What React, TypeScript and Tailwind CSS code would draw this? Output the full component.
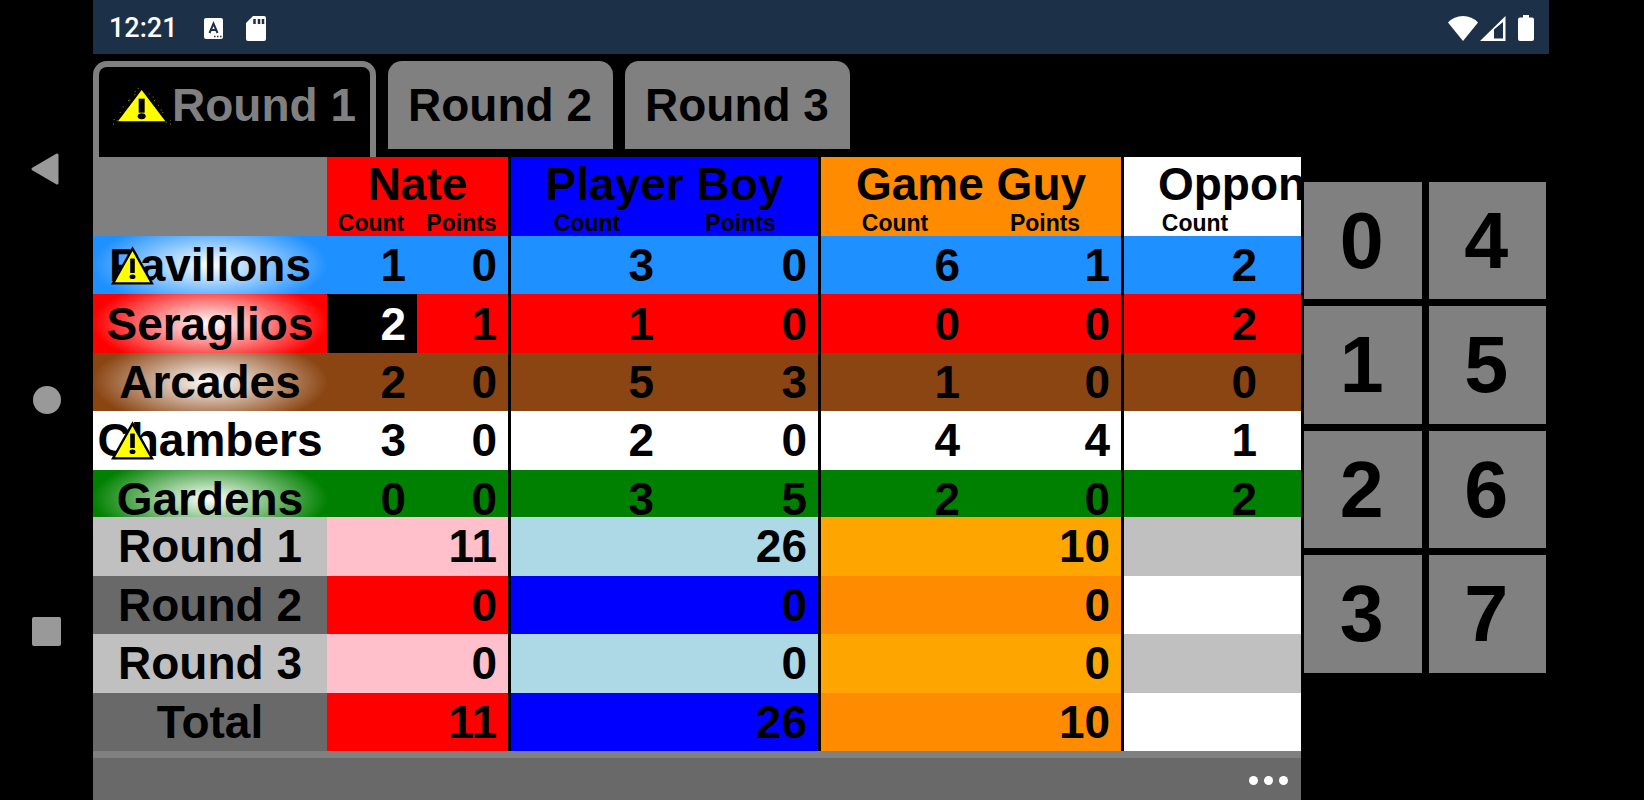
import React, { useState } from 'react';
import { clsx } from 'clsx';

const players = [
  { name: 'Nate', header: 'bg-[#ff0000]', dark: 'bg-[#ff0000]', light: 'bg-[#ffc0cb]', totals: ['11', '0', '0', '11'] },
  { name: 'Player Boy', header: 'bg-[#0000ff]', dark: 'bg-[#0000ff]', light: 'bg-[#add8e6]', totals: ['26', '0', '0', '26'] },
  { name: 'Game Guy', header: 'bg-[#ff8c00]', dark: 'bg-[#ff8c00]', light: 'bg-[#ffa500]', totals: ['10', '0', '0', '10'] },
  { name: 'Opponent', header: 'bg-white', dark: 'bg-white', light: 'bg-[#c0c0c0]', totals: ['', '', '', ''] },
];

const buildings = [
  { name: 'Pavilions', warning: true, color: 'bg-[#1e90ff]', glow: 'bg-[radial-gradient(118px_44px,white,#1e90ff)]', cells: ['1', '0', '3', '0', '6', '1', '2', ''] },
  { name: 'Seraglios', warning: false, color: 'bg-[#ff0000]', glow: 'bg-[radial-gradient(118px_44px,white,#ff0000)]', cells: ['2', '1', '1', '0', '0', '0', '2', ''] },
  { name: 'Arcades', warning: false, color: 'bg-[#8b4513]', glow: 'bg-[radial-gradient(118px_44px,white,#8b4513)]', cells: ['2', '0', '5', '3', '1', '0', '0', ''] },
  { name: 'Chambers', warning: true, color: 'bg-white', glow: 'bg-white', cells: ['3', '0', '2', '0', '4', '4', '1', ''] },
  { name: 'Gardens', warning: false, color: 'bg-[#008000]', glow: 'bg-[radial-gradient(118px_44px,white,#008000)]', cells: ['0', '0', '3', '5', '2', '0', '2', ''] },
];

const rounds = ['Round 1', 'Round 2', 'Round 3'];
const summaryRows = [...rounds, 'Total'];
const keys = [0, 4, 1, 5, 2, 6, 3, 7];

const Warning = ({ className }: { className?: string }) => (
  <svg viewBox="0 0 130 116" className={className} aria-hidden="true">
    <path d="M65 7 L124 112 H6 Z" fill="#ffff00" stroke="#000" strokeWidth="7" />
    <rect x="58" y="37" width="14" height="44" rx="2" />
    <ellipse cx="65" cy="92" rx="9" ry="7" />
  </svg>
);

const TabWarning = () => (
  <svg viewBox="0 0 180 114" className="h-[38px] w-[60px]" aria-hidden="true">
    <path d="M89 6 L160 100 H18 Z" fill="#ffff00" />
    <rect x="80" y="32" width="18" height="42" />
    <ellipse cx="89" cy="85" rx="12" ry="9" />
    <path
      d="M77 2h3M68 11h3M67 20h3M52 36h3M48 38h3M32 57h3M23 73h3M5 95h3M3 108h3M14 98h3M110 18h3M122 27h3M126 38h3M138 52h3M146 66h3M151 73h3M161 103h3M174 108h3M174 98h2"
      stroke="#8c8c00"
      strokeWidth="3"
    />
  </svg>
);

const SystemNav = () => (
  <nav aria-label="System" className="grid w-[93px] shrink-0 grid-rows-3 justify-items-center py-[53px]">
    <button aria-label="Back">
      <svg viewBox="0 0 30 34" className="mr-1 h-[34px] w-[30px]">
        <path d="M3 17 L27 3 V31 Z" fill="#999" stroke="#999" strokeWidth="3" strokeLinejoin="round" />
      </svg>
    </button>
    <button aria-label="Home">
      <span className="block size-7 rounded-full bg-[#999]" />
    </button>
    <button aria-label="Recent apps">
      <span className="block size-[29px] rounded-xs bg-[#999]" />
    </button>
  </nav>
);

const StatusBar = () => (
  <header className="flex h-[54px] shrink-0 items-center bg-[#1c3148] pt-[2px] pr-[15px] pl-4 text-white">
    <span className="font-[Roboto,sans-serif] text-[27px] leading-8 font-medium">12:21</span>
    <svg viewBox="0 0 19 21" className="ml-[26px] h-[21px] w-[19px]" aria-hidden="true">
      <rect width="19" height="21" rx="2" fill="#fff" />
      <path d="M5.5 15 L9.5 5.5 L13.5 15 M7 12 H12" fill="none" stroke="#1c3148" strokeWidth="2" />
      <path d="M10 18.5h1.5M13 18.5h1.5M16 18.5h1.5" stroke="#1c3148" strokeWidth="1.5" />
    </svg>
    <svg viewBox="0 0 20 25" className="ml-[23px] h-[25px] w-5" aria-hidden="true">
      <path d="M7 0H18a2 2 0 0 1 2 2V23a2 2 0 0 1-2 2H2a2 2 0 0 1-2-2V7Z" fill="#fff" />
      <path d="M8.5 3v5M13 3v5M17 3v5" stroke="#1c3148" strokeWidth="2.5" />
    </svg>
    <svg viewBox="0 0 30 25" className="ml-auto h-[25px] w-[30px]" aria-hidden="true">
      <path d="M0 6.5 Q6 0 15 0 T30 6.5 L15 25Z" fill="#fff" />
    </svg>
    <svg viewBox="0 0 26 25" className="ml-[2px] h-[25px] w-[26px]" aria-hidden="true">
      <path fillRule="evenodd" d="M0 25 L25.500 0 V25Z M14 13.500 V22.500 H23 V6Z" fill="#fff" />
    </svg>
    <svg viewBox="0 0 16 26" className="ml-3 h-[26px] w-4" aria-hidden="true">
      <path d="M5 0h6v2.500h3a2 2 0 0 1 2 2V24a2 2 0 0 1-2 2H2a2 2 0 0 1-2-2V4.500a2 2 0 0 1 2-2h3Z" fill="#fff" />
    </svg>
  </header>
);

const Columns = () => (
  <colgroup>
    <col className="w-[234px]" />
    <col className="w-[90px]" />
    <col className="w-[94px]" />
    <col className="w-[154px]" />
    <col className="w-[156px]" />
    <col className="w-[150px]" />
    <col className="w-[153px]" />
    <col className="w-36" />
    <col className="w-36" />
  </colgroup>
);

const ScoreTable = () => (
  <div className="min-h-0 flex-1 overflow-hidden">
    <table className="h-[371px] w-[1319px] table-fixed border-separate border-spacing-0 leading-none">
      <Columns />
      <thead>
        <tr className="h-[53px]">
          <td rowSpan={2} className="bg-[#808080] p-0" />
          {players.map((player) => (
            <th key={player.name} colSpan={2} className={clsx('border-r-3 border-black p-0', player.header)}>
              {player.name}
            </th>
          ))}
        </tr>
        <tr className="h-[26px] text-[23px]">
          {players.map((player) => (
            <React.Fragment key={player.name}>
              <th className={clsx('py-0 pr-[2px] pl-0', player.header)}>Count</th>
              <th className={clsx('border-r-3 border-black py-0 pr-[2px] pl-0', player.header)}>Points</th>
            </React.Fragment>
          ))}
        </tr>
      </thead>
      <tbody>
        {buildings.map((building) => (
          <tr key={building.name} className={building.color}>
            <th scope="row" className={clsx('relative p-0', building.glow)}>
              {building.name}
              {building.warning && <Warning className="absolute top-[10px] left-[18px] h-[39px] w-[43px]" />}
            </th>
            {building.cells.map((cell, index) => (
              <td
                key={index}
                className={clsx(
                  'py-0 pr-[11px] pl-0 text-right',
                  index % 2 === 1 && 'border-r-3 border-black',
                  building.name === 'Seraglios' && index === 0 && 'bg-black text-white'
                )}
              >
                {cell}
              </td>
            ))}
          </tr>
        ))}
      </tbody>
    </table>
  </div>
);

const SummaryTable = () => (
  <div className="shrink-0 overflow-hidden">
    <table className="h-[234px] w-[1319px] table-fixed border-separate border-spacing-0 leading-none">
      <Columns />
      <tbody>
        {summaryRows.map((label, row) => (
          <tr key={label}>
            <th scope="row" className={clsx('p-0', row % 2 === 0 ? 'bg-[#c0c0c0]' : 'bg-[#696969]')}>
              {label}
            </th>
            {players.map((player) => (
              <td
                key={player.name}
                colSpan={2}
                className={clsx(
                  'border-r-3 border-black py-0 pr-[11px] pl-0 text-right',
                  row % 2 === 0 ? player.light : player.dark
                )}
              >
                {player.totals[row]}
              </td>
            ))}
          </tr>
        ))}
      </tbody>
    </table>
  </div>
);

const App = () => {
  const [activeRound, setActiveRound] = useState(0);

  return (
    <div className="flex h-screen bg-black font-['Liberation_Sans',Arial,sans-serif] text-[46px] leading-none font-bold text-black">
      <SystemNav />
      <div className="flex min-w-0 flex-1 flex-col">
        <StatusBar />
        <main className="flex min-h-0 flex-1">
          <div className="flex min-w-0 flex-1 flex-col">
            <div role="tablist" className="flex h-[103px] shrink-0 items-start gap-3 pt-[7px]">
              {rounds.map((round, index) => (
                <button
                  key={round}
                  role="tab"
                  aria-selected={index === activeRound}
                  onClick={() => setActiveRound(index)}
                  className={clsx(
                    'flex rounded-t-[14px]',
                    index === activeRound
                      ? 'h-24 border-x-6 border-t-6 border-[#808080] pt-[15px] pr-[14px] pl-[13px] text-[#808080]'
                      : 'h-[88px] bg-[#808080] pt-[21px] pr-[21px] pl-5'
                  )}
                >
                  {index === 0 && (
                    <span className="pt-[6px]">
                      <TabWarning />
                    </span>
                  )}
                  {round}
                </button>
              ))}
            </div>
            <ScoreTable />
            <SummaryTable />
            <footer className="flex h-[49px] shrink-0 items-center justify-end border-t-7 border-[#808080] bg-[#696969] pr-[13px]">
              <button aria-label="More" className="flex gap-[6px] pt-[2px]">
                <span className="size-[9px] rounded-full bg-white" />
                <span className="size-[9px] rounded-full bg-white" />
                <span className="size-[9px] rounded-full bg-white" />
              </button>
            </footer>
          </div>
          <div className="grid w-[248px] shrink-0 grid-cols-2 gap-[7px] self-center px-[3px] text-[79px]">
            {keys.map((key) => (
              <button key={key} className="aspect-square bg-[#808080] pr-[2px]">
                {key}
              </button>
            ))}
          </div>
        </main>
      </div>
      <div className="w-[95px] shrink-0" />
    </div>
  );
};

export default App;
